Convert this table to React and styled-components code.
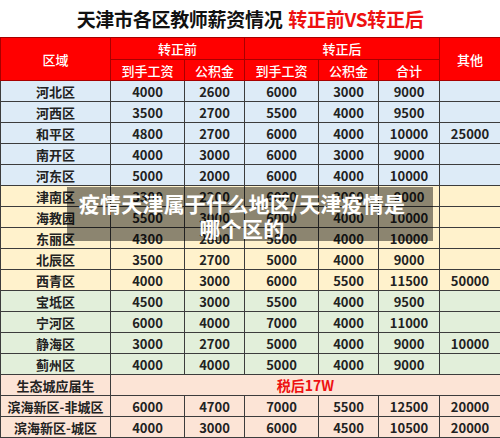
import styled, { createGlobalStyle } from "styled-components"

const GlobalStyle = createGlobalStyle`
  html, body {
    margin: 0;
    padding: 0;
    background: #ffffff;
  }
  body {
    font-family: "Noto Sans CJK SC", "Noto Sans", sans-serif;
  }
`

const Page = styled.div`
  position: relative;
  width: 500px;
  height: 438px;
  overflow: hidden;
  background: #ffffff;
`

const Title = styled.div`
  height: 37px;
  display: flex;
  align-items: center;
  justify-content: center;
  font-size: 19px;
  font-weight: 700;
  color: #111111;
  letter-spacing: -0.3px;
`

const TitleRed = styled.span`
  color: #ee1111;
  margin-left: 6px;
`

const Table = styled.table`
  width: 500px;
  border-collapse: collapse;
  table-layout: fixed;
`

const HeadCell = styled.th`
  height: ${(p) => p.$h || 21}px;
  padding: 0;
  background: #ff0000;
  color: #ffffff;
  font-size: 13px;
  font-weight: 500;
  border: 1px solid #a80000;
  text-align: center;
  line-height: 1;
`

const bg = {
  blue: "#ddebf7",
  yellow: "#fff2cc",
  green: "#e2efda",
  peach: "#fce4d6",
}

const Cell = styled.td`
  height: 20px;
  padding: 0;
  background: ${(p) => bg[p.$tone]};
  color: ${(p) => (p.$red ? "#ee1111" : "#222222")};
  font-size: ${(p) => (p.$red ? 14 : 13)}px;
  font-weight: 700;
  border: 1px solid #3c3c3c;
  text-align: center;
  line-height: 1;
  white-space: nowrap;
`

const Overlay = styled.div`
  position: absolute;
  left: 67px;
  top: 187px;
  width: 366px;
  height: 54px;
  box-sizing: border-box;
  padding: 4px 24px 0 8px;
  background: rgba(0, 0, 0, 0.45);
  color: #ffffff;
  font-size: 21px;
  font-weight: 700;
  line-height: 25px;
  text-align: center;
  letter-spacing: 0.2px;
`

const rows = [
  ["河北区", "4000", "2600", "6000", "3000", "9000", "", "blue"],
  ["河西区", "3500", "2700", "5500", "4000", "9500", "", "blue"],
  ["和平区", "4800", "2700", "6000", "4000", "10000", "25000", "blue"],
  ["南开区", "4000", "3000", "6000", "3000", "9000", "", "blue"],
  ["河东区", "5000", "2000", "6000", "4000", "10000", "", "blue"],
  ["津南区", "3300", "2200", "6000", "3000", "9000", "", "yellow"],
  ["海教园", "5500", "3000", "6000", "4000", "10000", "", "yellow"],
  ["东丽区", "4300", "2800", "5800", "4000", "10000", "", "yellow"],
  ["北辰区", "3500", "2700", "5000", "4000", "9000", "", "yellow"],
  ["西青区", "4000", "3000", "6000", "5500", "11500", "50000", "yellow"],
  ["宝坻区", "4500", "3000", "5500", "4000", "9500", "", "green"],
  ["宁河区", "6000", "4000", "7000", "4000", "11000", "", "green"],
  ["静海区", "3000", "2700", "5000", "4000", "9000", "10000", "green"],
  ["蓟州区", "4000", "4000", "5000", "4000", "9000", "", "green"],
]

const binhai = [
  ["滨海新区-非城区", "6000", "4700", "7000", "5500", "12500", "20000"],
  ["滨海新区-城区", "4000", "3000", "6000", "4500", "10500", "20000"],
]

const App = () => {
  return (
    <Page>
      <GlobalStyle />
      <Title>
        天津市各区教师薪资情况
        <TitleRed>转正前VS转正后</TitleRed>
      </Title>
      <Table>
        <colgroup>
          <col style={{ width: 110 }} />
          <col style={{ width: 74 }} />
          <col style={{ width: 60 }} />
          <col style={{ width: 74 }} />
          <col style={{ width: 60 }} />
          <col style={{ width: 61 }} />
          <col style={{ width: 61 }} />
        </colgroup>
        <thead>
          <tr>
            <HeadCell rowSpan={2}>区域</HeadCell>
            <HeadCell colSpan={2} $h={21}>
              转正前
            </HeadCell>
            <HeadCell colSpan={3} $h={21}>
              转正后
            </HeadCell>
            <HeadCell rowSpan={2}>其他</HeadCell>
          </tr>
          <tr>
            <HeadCell $h={20}>到手工资</HeadCell>
            <HeadCell $h={20}>公积金</HeadCell>
            <HeadCell $h={20}>到手工资</HeadCell>
            <HeadCell $h={20}>公积金</HeadCell>
            <HeadCell $h={20}>合计</HeadCell>
          </tr>
        </thead>
        <tbody>
          {rows.map((r) => (
            <tr key={r[0]}>
              {r.slice(0, 7).map((v, i) => (
                <Cell key={i} $tone={r[7]}>
                  {v}
                </Cell>
              ))}
            </tr>
          ))}
          <tr>
            <Cell $tone="peach">生态城应届生</Cell>
            <Cell $tone="peach" $red colSpan={6}>
              税后17W
            </Cell>
          </tr>
          {binhai.map((r) => (
            <tr key={r[0]}>
              {r.map((v, i) => (
                <Cell key={i} $tone="peach">
                  {v}
                </Cell>
              ))}
            </tr>
          ))}
        </tbody>
      </Table>
      <Overlay>
        疫情天津属于什么地区/天津疫情是
        <br />
        哪个区的
      </Overlay>
    </Page>
  )
}

export default App
